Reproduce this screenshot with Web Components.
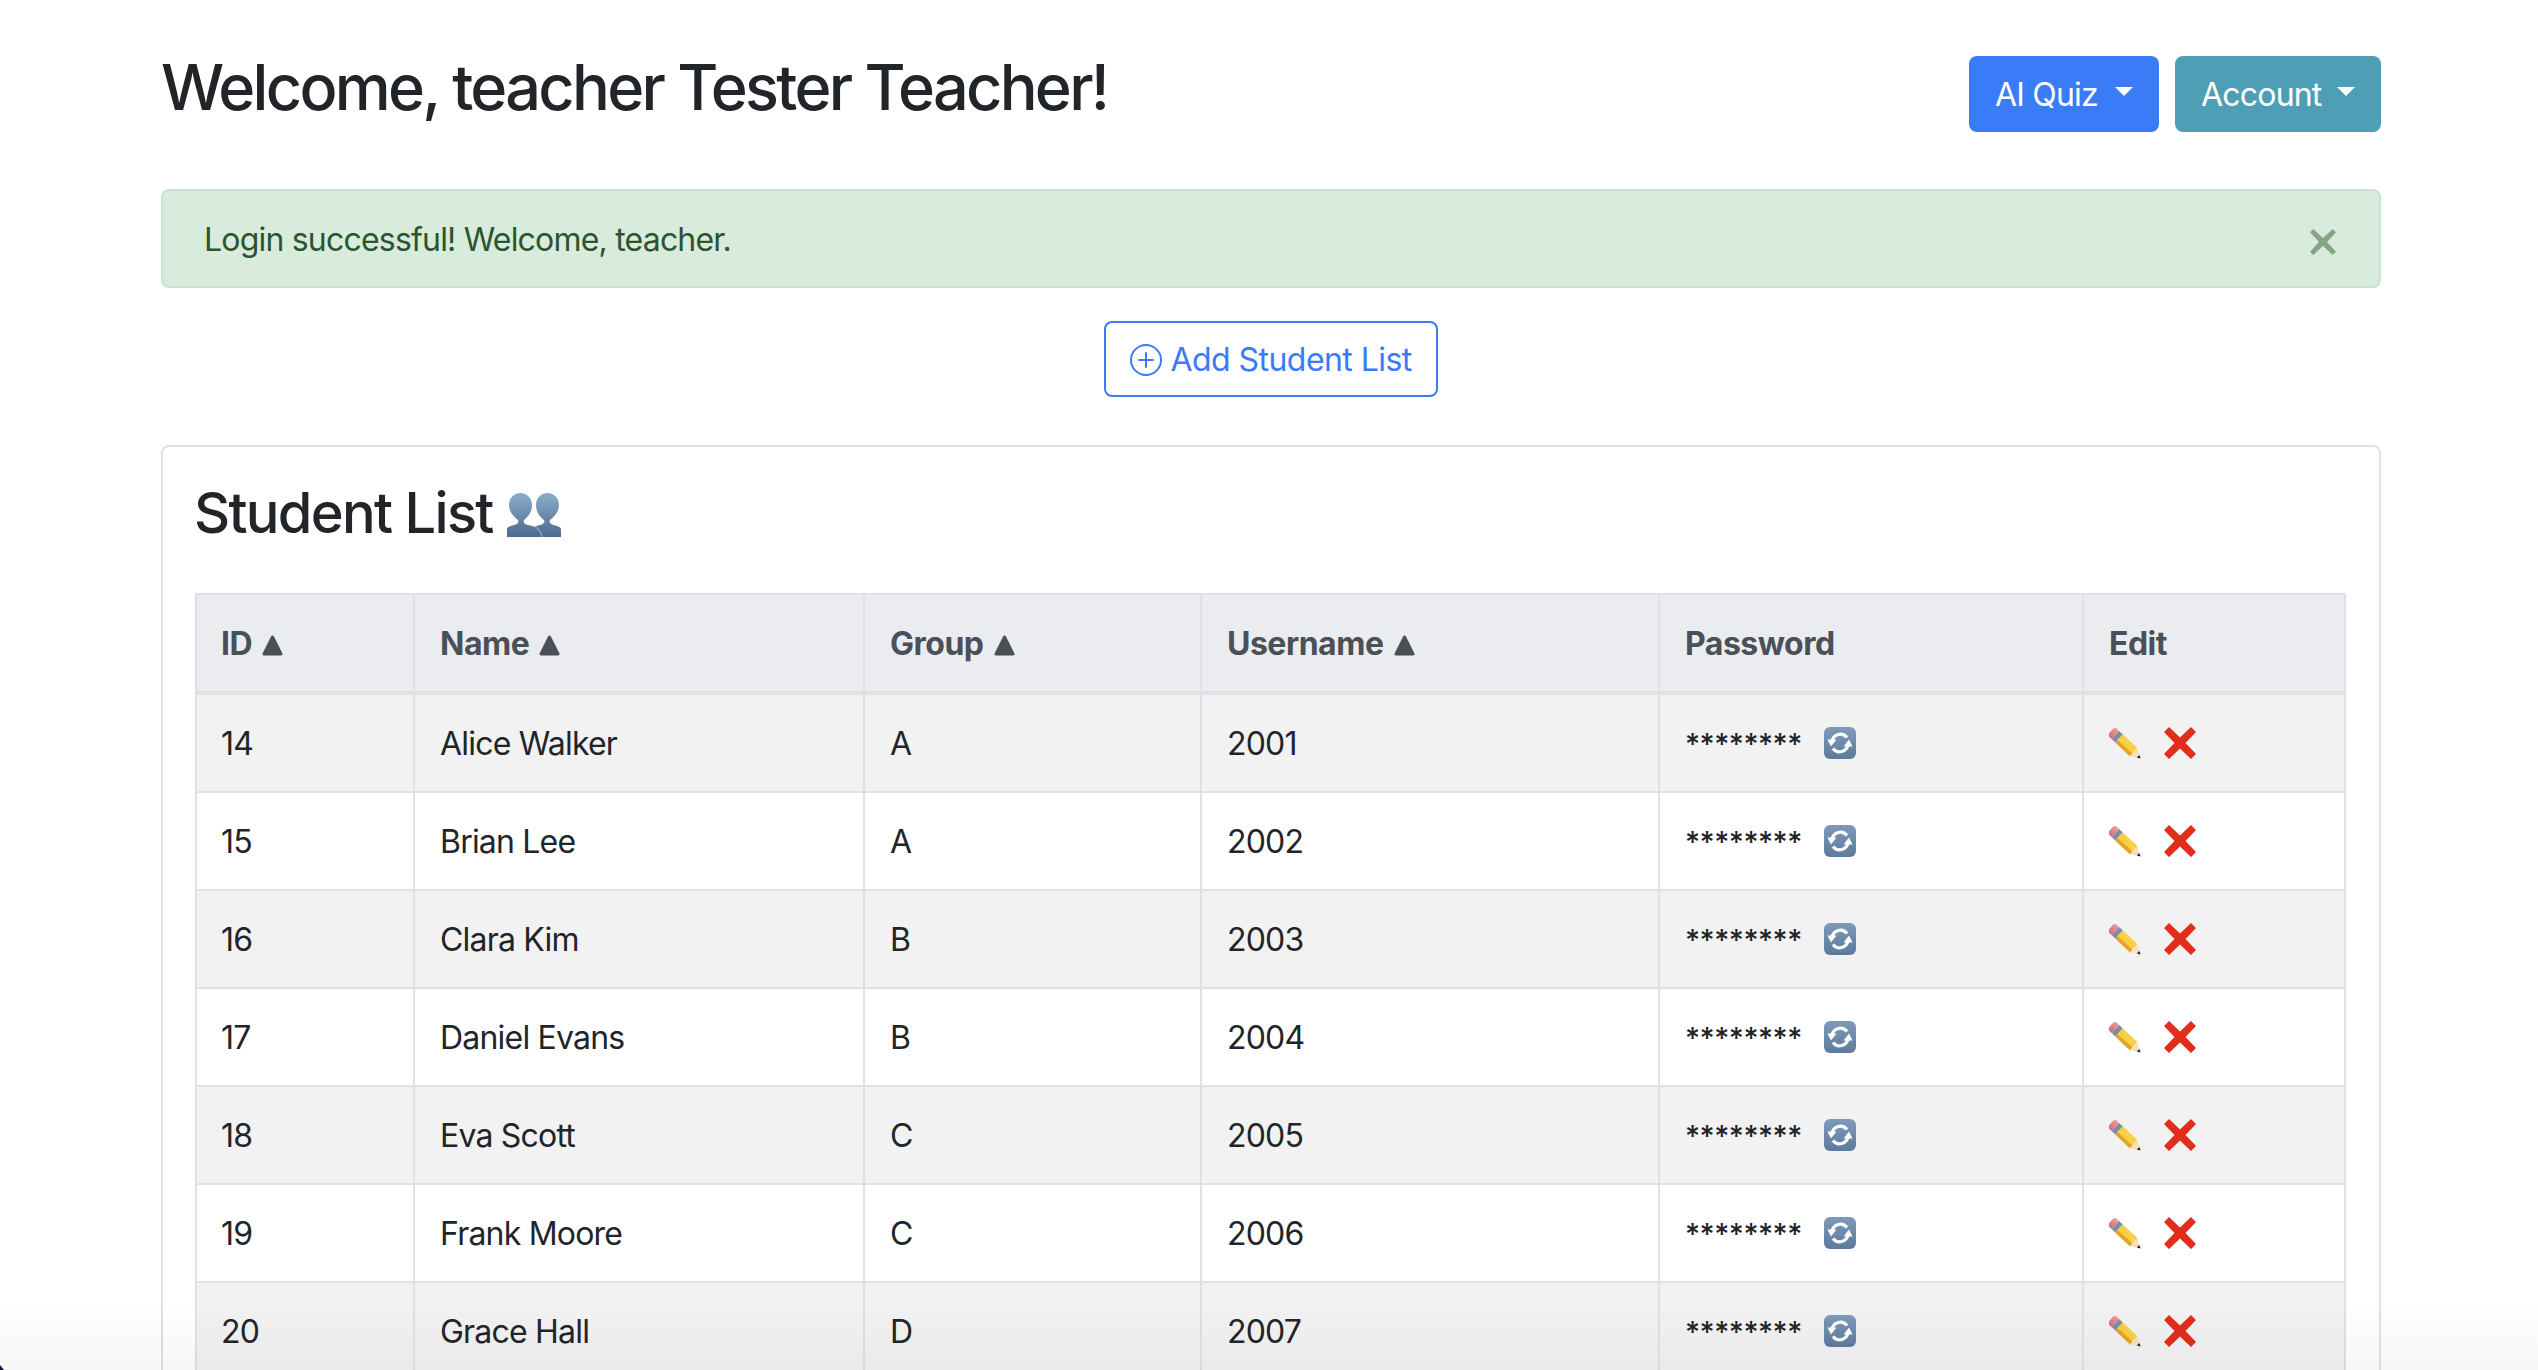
<!DOCTYPE html>
<html lang="en"><head><meta charset="utf-8"><title>Students</title>
<style>
html,body{margin:0;padding:0;height:1370px;overflow:hidden;background:#fff}
body{font-family:Inter,"Liberation Sans",sans-serif;color:#212529;font-size:32px}
</style></head><body>
<app-page></app-page>
<script>
const def=(name,html,init)=>customElements.define(name,class extends HTMLElement{
  constructor(){super();this.attachShadow({mode:'open'}).innerHTML=html;}
  connectedCallback(){init&&init(this);}
});
def('icon-pencil',`<style>:host{display:inline-block;width:34px;height:32px;line-height:0}</style>
<svg width="34" height="32" viewBox="0 0 34 32"><defs><linearGradient id="e" x1="0" y1="0" x2="0" y2="1"><stop offset="0" stop-color="#ee9ea0"/><stop offset="1" stop-color="#d9686e"/></linearGradient></defs>
<g transform="translate(2 4) rotate(43)"><path d="M2 -5.500H6V5.500H2A3 3 0 0 1 0 3V-3A3 3 0 0 1 2 -5.500Z" fill="url(#e)"/><rect x="6" y="-5.500" width="5" height="11" fill="#7d8ea3"/><rect x="11" y="-5.500" width="20" height="11" fill="#f8cf45"/><rect x="11" y="2" width="20" height="3.500" fill="#e2a326"/><path d="M31 -5.500L40 0L31 5.500Z" fill="#f5e0ba"/><path d="M37 -1.800L40.500 0L37 1.800Z" fill="#222"/></g></svg>`);
def('icon-cross',`<style>:host{display:inline-block;width:32px;height:32px;line-height:0}</style>
<svg width="32" height="32" viewBox="0 0 32 32"><path d="M5 0L16 10.500L27 0L32 5L21.500 16L32 27L27 32L16 21.500L5 32L0 27L10.500 16L0 5Z" fill="#e02d1c"/></svg>`);
def('icon-refresh',`<style>:host{display:inline-block;width:32px;height:32px;line-height:0}</style>
<svg width="32" height="32" viewBox="0 0 32 32"><defs><linearGradient id="r" x1="0" y1="0" x2="0" y2="1"><stop offset="0" stop-color="#7f9ab8"/><stop offset="1" stop-color="#5d7a9c"/></linearGradient></defs><rect width="32" height="32" rx="6" fill="url(#r)"/>
<path d="M8 14A8.500 8.500 0 0 1 23 10.500" fill="none" stroke="#fff" stroke-width="3.200"/><path d="M3.500 12.500L12.500 12.500L7 19.500Z" fill="#fff"/>
<path d="M24 18A8.500 8.500 0 0 1 9 21.500" fill="none" stroke="#fff" stroke-width="3.200"/><path d="M28.500 19.500L19.500 19.500L25 12.500Z" fill="#fff"/></svg>`);
def('icon-people',`<style>:host{display:inline-block;width:54px;height:44px;line-height:0}</style>
<svg width="54" height="44" viewBox="0 0 54 44"><defs><linearGradient id="b" x1="0" y1="0" x2="0" y2="1"><stop offset="0" stop-color="#8cadc9"/><stop offset="1" stop-color="#4b6b90"/></linearGradient></defs>
<path d="M54 44V36C54 34 50 33 47 32C43 31 42 29 43 27C47 24 52 19 52 12C52 5 47 0 40.500 0C34 0 29 5 29 12C29 19 33 24 37 27C38 29 37 31 33 32C28 33 24 36 24 38V44Z" fill="url(#b)"/>
<path d="M0 44V36C0 34 4 33 7 32C11 31 12 29 11 27C7 24 2 19 2 12C2 5 7 0 13.500 0C20 0 25 5 25 12C25 19 21 24 17 27C16 29 17 31 21 32C27 33 31 35 33 38V44Z" fill="url(#b)"/>
<path d="M27 33.500C31 35 34 38 35 44" fill="none" stroke="#a5bdd4" stroke-width="1"/></svg>`);
def('drop-button',`<style>
:host{display:inline-flex;align-items:center;box-sizing:border-box;height:76px;width:var(--w);padding:0 26px;border-radius:8px;background:var(--bg);color:#fff;font-size:32px;letter-spacing:-.8px;white-space:nowrap}
i{display:inline-block;margin-left:auto;border-top:9px solid #fff;border-left:9px solid transparent;border-right:9px solid transparent;position:relative;top:-3px}
</style><slot></slot><i></i>`);
def('page-header',`<style>
:host{display:flex;justify-content:space-between;align-items:flex-start;padding-top:56px}
h1{margin:0;font-size:63px;font-weight:550;line-height:62px;letter-spacing:-2.700px;color:#212529}
div{display:flex;gap:16px}
</style><h1>Welcome, teacher Tester Teacher!</h1><div><drop-button style="--bg:#3a7bf8;--w:190px">AI Quiz</drop-button><drop-button style="--bg:#4e9fb6;--w:206px">Account</drop-button></div>`);
def('alert-box',`<style>
:host{display:flex;justify-content:space-between;align-items:center;box-sizing:border-box;height:99px;margin-top:57px;padding:0 43px 0 41px;background:#d9ebdd;border:2px solid #c9e3cf;border-radius:8px;color:#2a552d;font-size:32px;letter-spacing:-.8px}
svg{display:block;position:relative;top:3px}
span{position:relative;top:1px}
</style><span><slot></slot></span><svg width="26" height="26" viewBox="0 0 16 16"><path fill="#86a587" d="M2 0 8 5.500 14 0 16 2 10.500 8 16 14 14 16 8 10.500 2 16 0 14 5.500 8 0 2Z"/></svg>`);
def('add-button',`<style>
:host{display:flex;justify-content:center;margin-top:33px;padding-right:1px}
a{display:flex;align-items:center;box-sizing:border-box;height:76px;width:334px;padding:0 24px;gap:9px;border:2px solid #3a7bf8;border-radius:8px;color:#3a7bf8;font-size:32px;letter-spacing:-.55px;white-space:nowrap}
svg{flex:none;position:relative;top:1px}
</style><a><svg width="32" height="32" viewBox="0 0 16 16" fill="#3a7bf8"><path d="M8 15A7 7 0 1 1 8 1a7 7 0 0 1 0 14zm0 1A8 8 0 1 0 8 0a8 8 0 0 0 0 16z"/><path d="M8 4a.5.5 0 0 1 .5.5v3h3a.5.5 0 0 1 0 1h-3v3a.5.5 0 0 1-1 0v-3h-3a.5.5 0 0 1 0-1h3v-3A.5.5 0 0 1 8 4z"/></svg><slot></slot></a>`);
const rows=[[14,'Alice Walker','A',2001],[15,'Brian Lee','A',2002],[16,'Clara Kim','B',2003],[17,'Daniel Evans','B',2004],[18,'Eva Scott','C',2005],[19,'Frank Moore','C',2006],[20,'Grace Hall','D',2007]];
const tri='<svg class="t" width="21" height="21" viewBox="0 0 21 21"><path d="M10.500 2L19 19H2Z" fill="#495057" stroke="#495057" stroke-width="3" stroke-linejoin="round"/></svg>';
def('student-table',`<style>
:host{display:block}
table{border-collapse:separate;border-spacing:0;table-layout:fixed;width:2151px;font-size:32px;letter-spacing:-.8px}
th,td{box-sizing:border-box;padding:0 24px 0 25px;text-align:left;border-right:2px solid #dee2e6;border-bottom:2px solid #dee2e6;white-space:nowrap}
th:first-child,td:first-child{border-left:2px solid #dee2e6;padding-left:24px}
th{height:102px;background:#ebecf0;color:#495057;font-weight:700;letter-spacing:-.5px;border-top:2px solid #dee2e6;border-bottom-width:4px}
td{height:98px;color:#212529}
tr:nth-child(odd) td{background:#f2f2f2}
.t{margin-left:3px;vertical-align:-1px}
.pw{display:flex;align-items:center}
.st{width:114px;font-size:29px;font-weight:500;letter-spacing:-.5px;position:relative;top:0}
icon-refresh{margin-left:25px}
.ed{display:flex;align-items:center;gap:21px}
</style><table><colgroup><col style="width:220px"><col style="width:450px"><col style="width:337px"><col style="width:458px"><col style="width:424px"><col style="width:262px"></colgroup>
<thead><tr><th>ID ${tri}</th><th>Name ${tri}</th><th>Group ${tri}</th><th>Username ${tri}</th><th>Password</th><th>Edit</th></tr></thead>
<tbody>${rows.map(r=>`<tr><td>${r[0]}</td><td>${r[1]}</td><td>${r[2]}</td><td>${r[3]}</td><td><div class="pw"><span class="st">********</span><icon-refresh></icon-refresh></div></td><td><div class="ed"><icon-pencil></icon-pencil><icon-cross></icon-cross></div></td></tr>`).join('')}</tbody></table>`);
def('student-card',`<style>
:host{display:block;margin-top:48px;box-sizing:border-box;height:1100px;padding:32px 32px 0;border:2px solid #dee2e6;border-bottom:0;border-radius:8px 8px 0 0}
h3{display:flex;align-items:center;gap:14px;margin:0 0 46px -1px;height:68px;font-size:56px;font-weight:500;letter-spacing:-1.700px;color:#212529}
icon-people{position:relative;top:2px}
</style><h3>Student List <icon-people></icon-people></h3><student-table></student-table>`);
def('app-page',`<style>
:host{display:block;width:2220px;margin-left:161px;height:1370px}
.fade{position:absolute;left:0;right:0;bottom:0;height:70px;background:linear-gradient(rgba(0,0,0,0),rgba(0,0,0,.035));pointer-events:none}
.nick{position:absolute;left:0;bottom:0;width:4px;height:5px;background:#1a1a40;clip-path:polygon(0 0,100% 100%,0 100%)}
</style><page-header></page-header><alert-box>Login successful! Welcome, teacher.</alert-box><add-button>Add Student List</add-button><student-card></student-card><div class="fade"></div><div class="nick"></div>`);
</script></body></html>
